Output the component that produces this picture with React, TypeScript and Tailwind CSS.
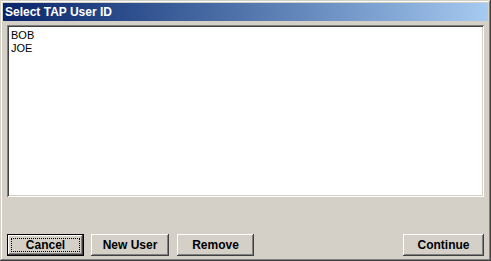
import React from 'react'

const FONT = { fontFamily: '"Liberation Sans", Arial, sans-serif' }

function Button({ label, isDefault, className }: { label: string; isDefault?: boolean; className?: string }) {
  if (isDefault) {
    return (
      <div className={`h-[22px] border border-black ${className ?? ''}`}>
        <button
          type="button"
          className="relative w-full h-full bg-[#d4d0c8] text-[12px] font-bold text-black shadow-[inset_-1px_-1px_#404040,inset_1px_1px_#fff,inset_-2px_-2px_#808080] flex items-center justify-center"
        >
          <span className="absolute inset-[3px] border border-dotted border-black" />
          {label}
        </button>
      </div>
    )
  }
  return (
    <button
      type="button"
      className={`h-[22px] bg-[#d4d0c8] text-[12px] font-bold text-black shadow-[inset_-1px_-1px_#404040,inset_1px_1px_#fff,inset_-2px_-2px_#808080] flex items-center justify-center ${className ?? ''}`}
    >
      {label}
    </button>
  )
}

export default function App() {
  const users = ['BOB', 'JOE']
  return (
    <div
      style={FONT}
      className="w-[491px] h-[261px] bg-[#d4d0c8] p-[3px] flex flex-col shadow-[inset_-1px_-1px_#404040,inset_1px_1px_#d4d0c8,inset_-2px_-2px_#808080,inset_2px_2px_#fff]"
    >
      {/* Title bar */}
      <div className="h-[18px] shrink-0 bg-gradient-to-r from-[#0a246a] to-[#a6caf0] flex items-center pl-[2px]">
        <span className="text-white text-[12px] font-bold leading-none">Select TAP User ID</span>
      </div>

      {/* User list */}
      <div className="mx-[4px] mt-[4px] h-[172px] bg-white p-[3px] shadow-[inset_1px_1px_#808080,inset_-1px_-1px_#fff,inset_2px_2px_#404040,inset_-2px_-2px_#d4d0c8]">
        <div className="pl-[1px] pt-[1px]">
          {users.map((u) => (
            <div key={u} className="text-[11px] leading-[13px] text-black">
              {u}
            </div>
          ))}
        </div>
      </div>

      {/* Buttons */}
      <div className="mt-auto mb-[2px] px-[4px] flex items-center">
        <Button label="Cancel" isDefault className="w-[77px]" />
        <Button label="New User" className="w-[78px] ml-[7px]" />
        <Button label="Remove" className="w-[77px] ml-[8px]" />
        <Button label="Continue" className="w-[81px] ml-auto" />
      </div>
    </div>
  )
}
